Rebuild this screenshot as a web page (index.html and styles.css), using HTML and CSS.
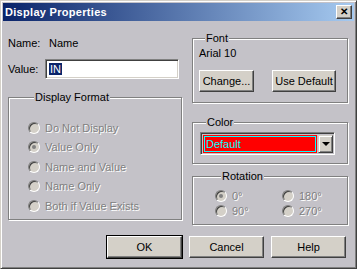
FILE: index.html
```html
<!DOCTYPE html>
<html lang="en">
<head>
    <meta charset="UTF-8">
    <title>Display Properties</title>
    <link rel="stylesheet" href="styles.css">
</head>
<body>

<div class="window">
    <div class="titlebar">
        <span class="title">Display Properties</span>
        <span class="close-btn">&#x2715;</span>
    </div>

    <div class="dialog">
        <div class="columns">
            <!-- left side: name, value, display format -->
            <div class="col-left">
                <div class="name-row"><span class="lbl lbl-name">Name:</span><span>Name</span></div>
                <div class="value-row">
                    <span class="lbl">Value:</span>
                    <div class="textbox"><span class="sel">IN</span></div>
                </div>
                <fieldset class="group format-group">
                    <legend>Display Format</legend>
                    <div class="radio-item"><span class="radio"></span><span class="dis">Do Not Display</span></div>
                    <div class="radio-item"><span class="radio checked"></span><span class="dis">Value Only</span></div>
                    <div class="radio-item"><span class="radio"></span><span class="dis">Name and Value</span></div>
                    <div class="radio-item"><span class="radio"></span><span class="dis">Name Only</span></div>
                    <div class="radio-item"><span class="radio"></span><span class="dis">Both if Value Exists</span></div>
                </fieldset>
            </div>

            <!-- right side: font, color, rotation -->
            <div class="col-right">
                <fieldset class="group font-group">
                    <legend>Font</legend>
                    <div class="font-name">Arial 10</div>
                    <div class="font-buttons">
                        <button class="btn btn-change">Change...</button>
                        <button class="btn btn-default">Use Default</button>
                    </div>
                </fieldset>

                <fieldset class="group color-group">
                    <legend>Color</legend>
                    <div class="combo">
                        <div class="combo-field"><span>Default</span></div>
                        <div class="combo-arrow"><span class="tri"></span></div>
                    </div>
                </fieldset>

                <fieldset class="group rotation-group">
                    <legend>Rotation</legend>
                    <div class="rot-grid">
                        <div class="radio-item"><span class="radio checked"></span><span class="dis">0°</span></div>
                        <div class="radio-item"><span class="radio"></span><span class="dis">180°</span></div>
                        <div class="radio-item"><span class="radio"></span><span class="dis">90°</span></div>
                        <div class="radio-item"><span class="radio"></span><span class="dis">270°</span></div>
                    </div>
                </fieldset>
            </div>
        </div>

        <div class="bottom-buttons">
            <button class="btn btn-ok">OK</button>
            <button class="btn">Cancel</button>
            <button class="btn">Help</button>
        </div>
    </div>
</div>

</body>
</html>
```

FILE: styles.css
```css
body {
    margin: 0;
    font-family: "Liberation Sans", Arial, sans-serif;
    font-size: 11px;
    color: #000;
    background: #c4c2c8;
}
.window {
    width: 357px;
    height: 269px;
    box-sizing: border-box;
    background: #c4c2c8;
    border: 1px solid;
    border-color: #d4d0c8 #404040 #404040 #d4d0c8;
    box-shadow: inset 1px 1px 0 #fff, inset -1px -1px 0 #808080;
    padding: 2px;
}
.titlebar {
    height: 18px;
    background: linear-gradient(to right, #0a246a, #a6caf0);
    display: flex;
    align-items: center;
    justify-content: space-between;
    padding: 0 2px 0 2px;
}
.title {
    color: #fff;
    font-weight: bold;
    font-size: 11px;
    letter-spacing: 0.3px;
}
.close-btn {
    width: 16px;
    height: 14px;
    box-sizing: border-box;
    background: #d4d0c8;
    border: 1px solid;
    border-color: #fff #404040 #404040 #fff;
    box-shadow: inset -1px -1px 0 #808080;
    font-size: 10px;
    font-weight: bold;
    line-height: 12px;
    text-align: center;
}
.dialog {
    padding: 0 6px 0 5px;
}
.columns {
    display: flex;
    gap: 10px;
}
.col-left {
    width: 174px;
}
.col-right {
    width: 156px;
    padding-top: 11px;
}
.lbl {
    display: inline-block;
    width: 37px;
}
.lbl-name {
    width: 41px;
}
.name-row {
    margin-top: 16px;
    height: 13px;
    line-height: 13px;
}
.value-row {
    margin-top: 9px;
    display: flex;
    align-items: center;
}
.textbox {
    width: 134px;
    height: 20px;
    box-sizing: border-box;
    background: #fff;
    border: 1px solid;
    border-color: #808080 #fff #fff #808080;
    box-shadow: inset 1px 1px 0 #404040, inset -1px -1px 0 #d4d0c8;
    padding: 3px 0 0 3px;
    line-height: 13px;
}
.sel {
    background: #0a246a;
    color: #fff;
    padding: 0 1px;
}
.group {
    margin: 0;
    padding: 0;
    min-inline-size: 0;
    box-sizing: border-box;
    border: 1px solid #808080;
    box-shadow: inset 1px 1px 0 #fff, 1px 1px 0 #fff;
}
.group legend {
    margin-left: 6px;
    padding: 0 1px;
    line-height: 13px;
    background: #c4c2c8;
}
.format-group {
    margin-top: 12px;
    height: 129px;
    padding: 14px 0 0 19px;
}
.radio-item {
    display: flex;
    align-items: center;
    height: 19.5px;
}
.radio {
    width: 12px;
    height: 12px;
    box-sizing: border-box;
    border-radius: 50%;
    background: #d4d0c8;
    border: 1px solid;
    border-color: #808080 #fff #fff #808080;
    box-shadow: inset 1px 1px 0 #404040;
    margin-right: 5px;
    position: relative;
}
.radio.checked::after {
    content: "";
    position: absolute;
    left: 3px;
    top: 3px;
    width: 4px;
    height: 4px;
    border-radius: 50%;
    background: #808080;
}
.dis {
    color: #808080;
    text-shadow: 1px 1px 0 #fff;
}
.font-group {
    height: 71px;
    padding: 2px 0 0 6px;
}
.font-name {
    line-height: 13px;
}
.font-buttons {
    display: flex;
    gap: 18px;
    margin-top: 10px;
}
.btn {
    height: 22px;
    box-sizing: border-box;
    background: #d4d0c8;
    border: 1px solid;
    border-color: #fff #404040 #404040 #fff;
    box-shadow: inset -1px -1px 0 #808080;
    font-family: "Liberation Sans", Arial, sans-serif;
    font-size: 11px;
    color: #000;
    padding: 0;
}
.btn-change {
    width: 55px;
}
.btn-default {
    width: 64px;
}
.color-group {
    margin-top: 13px;
    height: 48px;
    padding: 3px 0 0 7px;
}
.combo {
    width: 135px;
    height: 23px;
    box-sizing: border-box;
    border: 1px solid;
    border-color: #808080 #fff #fff #808080;
    box-shadow: inset 1px 1px 0 #404040;
    padding: 2px 1px 1px 2px;
    display: flex;
    gap: 1px;
}
.combo-field {
    flex: 1;
    background: #f00;
    padding: 1px;
}
.combo-field span {
    display: block;
    height: 100%;
    box-sizing: border-box;
    border: 1px solid #0ff;
    color: #0ff;
    padding-left: 1px;
    line-height: 14px;
}
.combo-arrow {
    width: 15px;
    box-sizing: border-box;
    background: #d4d0c8;
    border: 1px solid;
    border-color: #d4d0c8 #404040 #404040 #d4d0c8;
    box-shadow: inset 1px 1px 0 #fff, inset -1px -1px 0 #808080;
    display: flex;
    align-items: center;
    justify-content: center;
}
.tri {
    width: 0;
    height: 0;
    border-left: 4px solid transparent;
    border-right: 4px solid transparent;
    border-top: 4px solid #000;
}
.rotation-group {
    margin-top: 6px;
    height: 55px;
    padding: 6px 0 0 22px;
}
.rot-grid {
    display: grid;
    grid-template-columns: 67px 60px;
}
.rot-grid .radio-item {
    height: 14.5px;
}
.bottom-buttons {
    display: flex;
    justify-content: flex-end;
    gap: 7px;
    margin-top: 11px;
    padding-right: 2px;
}
.bottom-buttons .btn {
    width: 75px;
}
.btn-ok {
    outline: 1px solid #000;
}
```
